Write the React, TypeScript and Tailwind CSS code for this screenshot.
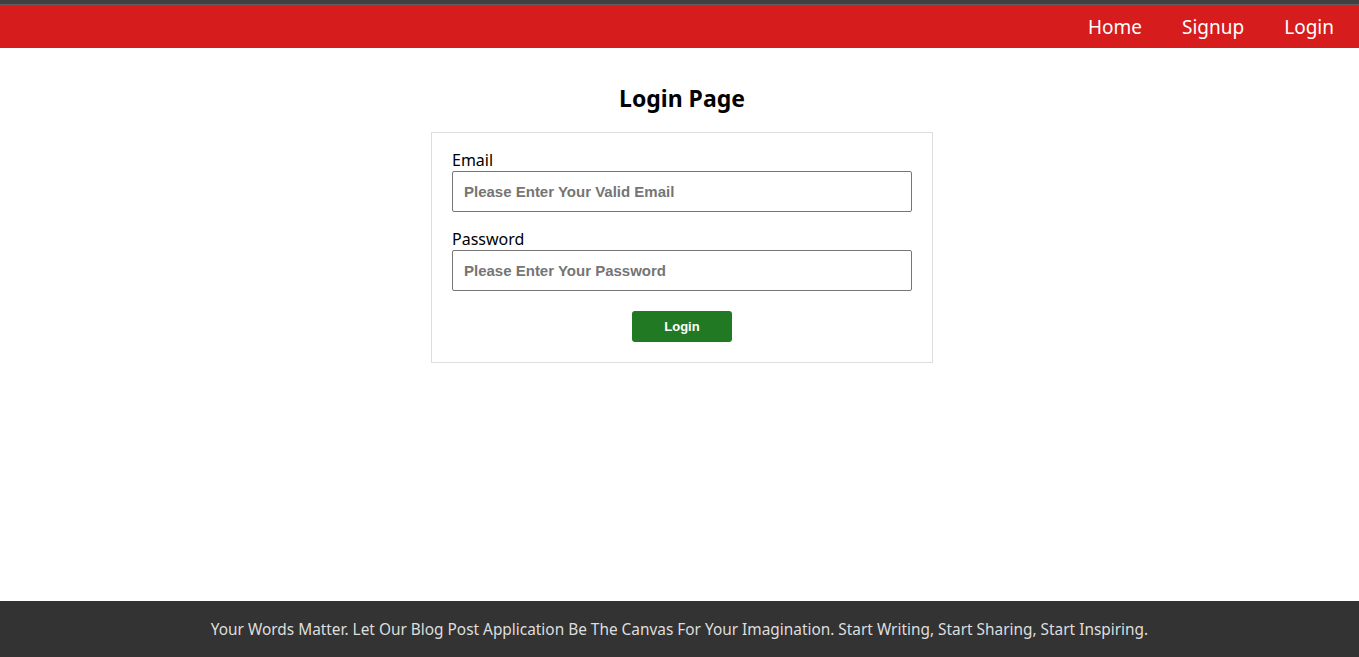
import React from 'react';

const font = { fontFamily: '"Noto Sans", "Open Sans", sans-serif' };
const arial = { fontFamily: '"Liberation Sans", Arial, sans-serif' };

const App: React.FC = () => {
  return (
    <div className="min-h-[657px] flex flex-col bg-white" style={font}>
      {/* top strip */}
      <div className="h-[4px] bg-[#404040] border-b border-[#5e5e5e] box-content"></div>

      {/* Navbar */}
      <nav className="h-[43px] bg-[#d61c1c] flex items-center justify-end pr-[25px]">
        <ul className="flex items-center gap-[40px] text-white text-[19px] pt-[2px]">
          <li><a href="#">Home</a></li>
          <li><a href="#">Signup</a></li>
          <li><a href="#">Login</a></li>
        </ul>
      </nav>

      {/* Main */}
      <main className="flex-1 flex flex-col items-center pl-[5px]">
        <h1 className="mt-[34px] text-[23px] font-bold text-black leading-[32px]">Login Page</h1>
        <form className="mt-[18px] w-[502px] border border-[#dddddd] px-[20px] pt-[17px] pb-[20px]">
          <div className="mb-[17px]">
            <label className="block text-[16px] leading-[21px] text-black">Email</label>
            <input
              type="email"
              placeholder="Please Enter Your Valid Email"
              className="w-full h-[41px] border border-[#767676] rounded-[2px] px-[11px] text-[15px] font-bold placeholder:text-[#757575] outline-none"
              style={arial}
            />
          </div>
          <div className="mb-[20px]">
            <label className="block text-[16px] leading-[21px] text-black">Password</label>
            <input
              type="password"
              placeholder="Please Enter Your Password"
              className="w-full h-[41px] border border-[#767676] rounded-[2px] px-[11px] text-[15px] font-bold placeholder:text-[#757575] outline-none"
              style={arial}
            />
          </div>
          <div className="flex justify-center">
            <button
              type="button"
              className="w-[100px] h-[31px] bg-[#217a23] text-white text-[13px] font-bold rounded-[3px]"
              style={arial}
            >
              Login
            </button>
          </div>
        </form>
      </main>

      {/* Footer */}
      <footer className="h-[56px] bg-[#333333] flex items-center justify-center">
        <p className="text-[#dedede] text-[15.4px] pt-[1px]">
          Your Words Matter. Let Our Blog Post Application Be The Canvas For Your Imagination. Start Writing, Start Sharing, Start Inspiring.
        </p>
      </footer>
    </div>
  );
};

export default App;
